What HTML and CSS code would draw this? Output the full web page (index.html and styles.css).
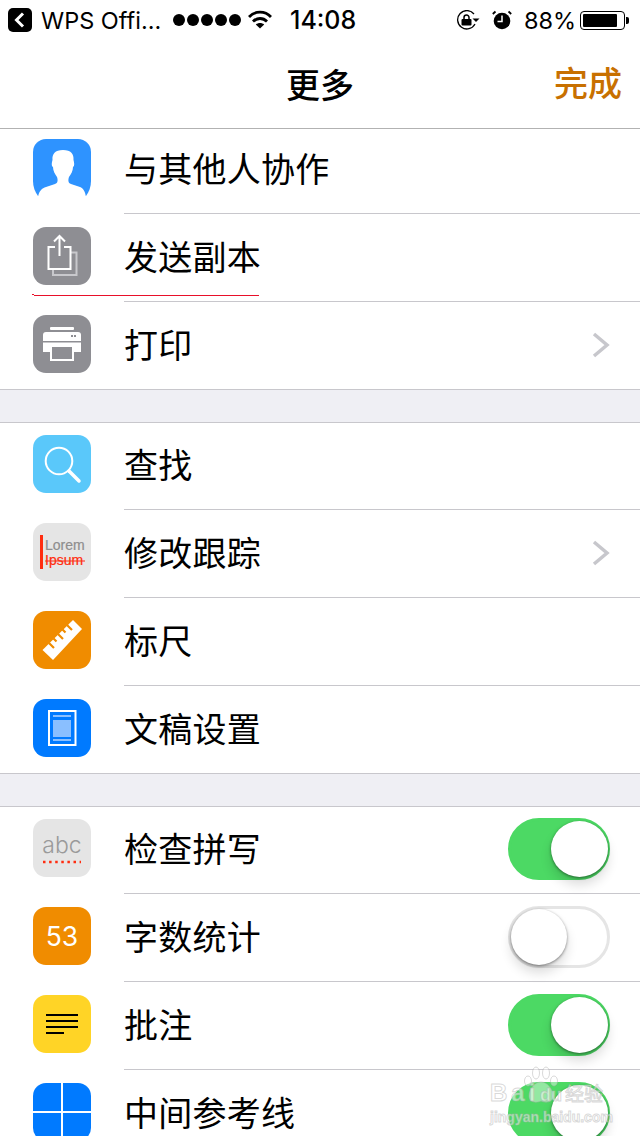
FILE: index.html
```html
<!DOCTYPE html>
<html lang="zh">
<head>
<meta charset="utf-8">
<title>更多</title>
<link rel="stylesheet" href="styles.css">
</head>
<body>
<div class="page">
  <header class="top">
    <div class="status">
      <span class="status__back"><svg viewBox="0 0 24 24" width="24" height="24"><rect width="24" height="24" rx="5" fill="#000"/><path d="M15 5.500 8.500 12l6.500 6.500" fill="none" stroke="#fff" stroke-width="3"/></svg></span>
      <span class="status__app">WPS Offi...</span>
      <span class="status__dots"><i></i><i></i><i></i><i></i><i></i></span>
      <svg class="status__wifi" viewBox="0 0 24 20" width="24" height="20"><path d="M1 7C7 .5 17 .5 23 7M5 11.500C9 7.500 15 7.500 19 11.500" fill="none" stroke="#000" stroke-width="2.800"/><path d="M7.800 14.500C10.300 12.500 13.700 12.500 16.200 14.500L12 18.500Z" fill="#000"/></svg>
      <span class="status__time">14:08</span>
      <svg class="status__lock" viewBox="0 0 24 20" width="24" height="20"><path d="M18 4A9.200 9.200 0 1 0 19 14" fill="none" stroke="#000" stroke-width="1.300"/><path d="M16.500 8.500h7L20 12Z" fill="#000"/><rect x="5.500" y="9" width="10" height="6.500" rx="1" fill="#000"/><path d="M8 9V7.500a2.500 2.500 0 0 1 5 0V9" fill="none" stroke="#000" stroke-width="1.500"/></svg>
      <svg class="status__alarm" viewBox="0 0 20 20" width="20" height="20"><path d="M3.500 1.500.8 4M16.500 1.500 19.200 4" stroke="#000" stroke-width="1.800" fill="none"/><circle cx="10" cy="11" r="8.300" fill="#000"/><path d="M10 5.500V11.500H5.500" fill="none" stroke="#fff" stroke-width="1.500"/></svg>
      <span class="status__pct">88%</span>
      <span class="battery"><span class="battery__level"></span></span><span class="battery__nub"></span>
    </div>
    <nav class="nav">
      <span></span>
      <h1 class="nav__title">更多</h1>
      <span class="nav__done">完成</span>
    </nav>
  </header>

  <section class="group">
    <div class="row">
      <svg class="icon" viewBox="0 0 58 58"><path d="M13 0H45A13 13 0 0 1 58 13V42C58 48 56 53 53 57H5C2 53 0 48 0 42V13A13 13 0 0 1 13 0Z" fill="#2e93ff"/><path d="M5 58C6 52 9 49 13 48L22 45C25 44 25 41 24 38C22 35 20 32 20 28C18 27 19 23 19.500 21C19 15 22 11 30 11C38 11 41 15 40.500 21C41 23 42 27 40 28C40 32 38 35 36 38C35 41 35 44 38 45L47 48C50 49 52 52 53 58Z" fill="#fff"/></svg>
      <div class="row__body"><span class="row__label">与其他人协作</span></div>
    </div>
    <div class="row">
      <svg class="icon" viewBox="0 0 58 58"><rect width="58" height="58" rx="13" fill="#8e8e93"/><path d="M37 25.500H43.500V48H20V42.500" fill="none" stroke="#c8c8cc" stroke-width="2"/><path d="M22 20H15.500V42H37.500V20H31" fill="none" stroke="#fff" stroke-width="2"/><path d="M26.500 9V29M21 14.500 26.500 9 32 14.500" fill="none" stroke="#fff" stroke-width="2"/></svg>
      <div class="row__body"><span class="row__label">发送副本</span></div>
    </div>
    <div class="row row--last">
      <svg class="icon" viewBox="0 0 58 58"><rect width="58" height="58" rx="13" fill="#8e8e93"/><rect x="17" y="12" width="24" height="3" rx="1" fill="#fff"/><path d="M10 37V20A3 3 0 0 1 13 17H45A3 3 0 0 1 48 20V37Z" fill="#fff"/><rect x="38" y="20" width="2" height="2" fill="#8e8e93"/><rect x="41" y="20" width="2" height="2" fill="#8e8e93"/><rect x="10" y="26" width="38" height="1.500" fill="#8e8e93"/><rect x="18" y="31" width="22" height="14" fill="#8e8e93" stroke="#fff" stroke-width="2"/></svg>
      <div class="row__body"><span class="row__label">打印</span><svg class="chevron" viewBox="0 0 18 26" width="18" height="26"><path d="M2 2 15 13 2 24" fill="none" stroke="#c7c7cc" stroke-width="3.500"/></svg></div>
    </div>
  </section>

  <section class="group">
    <div class="row">
      <svg class="icon" viewBox="0 0 58 58"><rect width="58" height="58" rx="13" fill="#5ac8fa"/><circle cx="26" cy="26" r="13.300" fill="none" stroke="#fff" stroke-width="2"/><path d="M36 36 46 46" stroke="#fff" stroke-width="3.500" stroke-linecap="round"/></svg>
      <div class="row__body"><span class="row__label">查找</span></div>
    </div>
    <div class="row">
      <svg class="icon" viewBox="0 0 58 58"><rect width="58" height="58" rx="13" fill="#e5e5e5"/><rect x="7" y="12" width="3" height="34" fill="#ff2d10"/><text x="12" y="27" class="icon__lorem">Lorem</text><text x="12" y="42" class="icon__ipsum">Ipsum</text><rect x="12" y="37.500" width="40" height="1" fill="#ff2d10"/></svg>
      <div class="row__body"><span class="row__label">修改跟踪</span><svg class="chevron" viewBox="0 0 18 26" width="18" height="26"><path d="M2 2 15 13 2 24" fill="none" stroke="#c7c7cc" stroke-width="3.500"/></svg></div>
    </div>
    <div class="row">
      <svg class="icon" viewBox="0 0 58 58"><rect width="58" height="58" rx="13" fill="#f08c00"/><path d="M9.500 39 40 9 49 18 20 49Z" fill="#fff"/><path d="M16 32 21 37M20.500 27.500 23.500 30.500M25 23 30 28M29.500 18.500 32.500 21.500M34 14 39 19" stroke="#f08c00" stroke-width="2.200" fill="none"/></svg>
      <div class="row__body"><span class="row__label">标尺</span></div>
    </div>
    <div class="row row--last">
      <svg class="icon" viewBox="0 0 58 58"><rect width="58" height="58" rx="13" fill="#007aff"/><rect x="16" y="12" width="26.500" height="34" fill="none" stroke="#fff" stroke-width="2"/><rect x="20" y="16" width="18" height="2" fill="#8abfff"/><rect x="20" y="21" width="18" height="17" fill="#8abfff"/><rect x="20" y="40" width="18" height="2" fill="#8abfff"/></svg>
      <div class="row__body"><span class="row__label">文稿设置</span></div>
    </div>
  </section>

  <section class="group">
    <div class="row">
      <svg class="icon" viewBox="0 0 58 58"><rect width="58" height="58" rx="13" fill="#e5e5e5"/><text x="29" y="34" class="icon__abc">abc</text><path d="M10 43H48" stroke="#ff2d10" stroke-width="2.500" stroke-dasharray="2.500 3.600"/></svg>
      <div class="row__body"><span class="row__label">检查拼写</span><span class="switch switch--on"><span class="switch__knob"></span></span></div>
    </div>
    <div class="row">
      <svg class="icon" viewBox="0 0 58 58"><rect width="58" height="58" rx="13" fill="#f08c00"/><text x="29" y="39" class="icon__count">53</text></svg>
      <div class="row__body"><span class="row__label">字数统计</span><span class="switch"><span class="switch__knob"></span></span></div>
    </div>
    <div class="row">
      <svg class="icon" viewBox="0 0 58 58"><rect width="58" height="58" rx="13" fill="#ffd426"/><path d="M13 20H45M13 26H45M13 32H45M13 38H31" stroke="#000" stroke-width="2"/></svg>
      <div class="row__body"><span class="row__label">批注</span><span class="switch switch--on"><span class="switch__knob"></span></span></div>
    </div>
    <div class="row">
      <svg class="icon" viewBox="0 0 58 58"><rect width="58" height="58" rx="13" fill="#007aff"/><path d="M29 0V58M0 29H58" stroke="#fff" stroke-width="2"/></svg>
      <div class="row__body"><span class="row__label">中间参考线</span><span class="switch switch--on"><span class="switch__knob"></span></span></div>
    </div>
  </section>

  <div class="markup"><i></i></div>
  <div class="watermark">
    <svg class="watermark__paw" viewBox="0 0 40 38" width="40" height="38"><g fill="rgba(255,255,255,.4)" stroke="rgba(170,170,170,.45)" stroke-width="1"><ellipse cx="5" cy="15" rx="3.500" ry="5"/><ellipse cx="13" cy="7" rx="3.500" ry="6"/><ellipse cx="23" cy="7" rx="3.500" ry="6"/><ellipse cx="31" cy="15" rx="3.500" ry="5"/><path d="M18 16C24 16 30 23 30 30C30 37 22 37 18 35C14 37 6 37 6 30C6 23 12 16 18 16Z"/></g></svg>
    <div class="watermark__brand"><span class="watermark__bai">Bai</span><b class="watermark__du">du</b><span class="watermark__jy">经验</span></div>
    <div class="watermark__url">jingyan.baidu.com</div>
  </div>
</div>
</body>
</html>
```
FILE: styles.css
```css
* { box-sizing: border-box; }
html, body { margin: 0; padding: 0; }
body {
  width: 640px;
  height: 1136px;
  overflow: hidden;
  background: #efeff4;
  color: #000;
  font-family: "Noto Sans CJK SC", "Liberation Sans", sans-serif;
}
.page { position: relative; width: 640px; height: 1136px; overflow: hidden; }

.top {
  position: relative;
  z-index: 1;
  height: 129px;
  background: #fff;
  border-bottom: 1px solid #b2b2b2;
}
.status {
  display: flex;
  align-items: center;
  height: 40px;
  padding-left: 8px;
  font-family: Inter, "Liberation Sans", sans-serif;
  font-size: 23.5px;
}
.status__back { display: block; width: 24px; height: 24px; margin-right: 9px; }
.status__back svg { display: block; }
.status__app { width: 132px; white-space: nowrap; }
.status__dots { display: flex; gap: 2px; width: 76px; }
.status__dots i { width: 12px; height: 12px; border-radius: 50%; background: #000; }
.status__wifi { margin-right: 18px; margin-left: -1px; }
.status__time { width: 100px; font-size: 25px; font-weight: 500; white-space: nowrap; }
.status__lock { margin-left: 66px; margin-right: 12px; }
.status__alarm { margin-right: 12px; }
.status__pct { width: 56px; white-space: nowrap; }
.battery { display: block; width: 45px; height: 19px; padding: 2px; border: 1px solid #000; border-radius: 4px; }
.battery__level { display: block; width: 88%; height: 100%; background: #000; border-radius: 1px; }
.battery__nub { width: 3px; height: 7px; margin-left: 1px; background: #000; border-radius: 0 2px 2px 0; }

.nav {
  display: grid;
  grid-template-columns: 1fr auto 1fr;
  align-items: center;
  height: 88px;
  padding: 0 18px;
  font-size: 34px;
}
.nav__title { margin: 0 0 1px; font-size: 34px; font-weight: 500; line-height: 84px; }
.nav__done { justify-self: end; margin-bottom: 4px; color: #c87000; font-weight: 500; line-height: 80px; }

.group { margin-bottom: 32px; background: #fff; box-shadow: inset 0 1px 0 #c8c7cc; }
.top + .group { margin-top: -3px; }
.row { display: flex; height: 88px; }
.row--last { border-bottom: 1px solid #c8c7cc; }
.icon { flex: none; display: block; width: 58px; height: 58px; margin: 13px 33px 0; }
.row__body {
  flex: 1;
  display: flex;
  align-items: center;
  justify-content: space-between;
  padding-right: 30px;
  border-bottom: 1px solid #c8c7cc;
}
.row--last .row__body { border-bottom: 0; }
.row__label { margin-bottom: 4px; font-size: 34px; line-height: 48px; letter-spacing: .25px; }
.chevron { display: block; margin-bottom: 2px; }

.icon__lorem, .icon__ipsum { font-family: "Liberation Sans", sans-serif; font-size: 14px; }
.icon__lorem { fill: #8e8e8e; stroke: #8e8e8e; stroke-width: .2px; }
.icon__ipsum { fill: #ff2d10; stroke: #ff2d10; stroke-width: .2px; }
.icon__abc { font-family: Inter, sans-serif; font-size: 23px; font-weight: 300; fill: #9a9a9a; text-anchor: middle; }
.icon__count { font-family: Inter, sans-serif; font-size: 26.5px; font-weight: 400; fill: #fff; text-anchor: middle; }

.switch {
  position: relative;
  display: block;
  width: 102px;
  height: 62px;
  margin-bottom: 1px;
  border: 3px solid #e5e5e5;
  border-radius: 31px;
  background: #fff;
}
.switch--on { border-color: #4cd964; background: #4cd964; }
.switch__knob {
  position: absolute;
  top: 0;
  left: 0;
  width: 56px;
  height: 56px;
  border-radius: 50%;
  background: #fff;
  box-shadow: 0 8px 12px rgba(0, 0, 0, .14), 0 1px 3px rgba(0, 0, 0, .45);
}
.switch--on .switch__knob { left: auto; right: -1px; width: 57px; }

.markup {
  position: absolute;
  left: 34px;
  top: 295px;
  width: 225px;
  height: 1px;
  background: #e8102a;
}
.markup i { position: absolute; left: -2px; top: -1px; width: 2px; height: 1px; background: #e8102a; }

.watermark {
  position: absolute;
  z-index: 2;
  left: 490px;
  top: 1066px;
  width: 118px;
  color: rgba(255, 255, 255, .5);
  font-family: "Liberation Sans", "Noto Sans CJK SC", sans-serif;
  font-weight: 700;
  -webkit-text-stroke: 1px rgba(170, 170, 170, .45);
}
.watermark__paw { position: absolute; left: 33px; top: 0; }
.watermark__brand { position: relative; display: flex; align-items: baseline; margin-top: 15px; line-height: 24px; white-space: nowrap; }
.watermark__bai { width: 50px; font-size: 24px; letter-spacing: 4px; }
.watermark__du { width: 25px; font-size: 18px; }
.watermark__jy { font-size: 19px; font-weight: 400; }
.watermark__url { position: relative; margin-top: 1px; font-size: 14px; line-height: 18px; white-space: nowrap; }
```
